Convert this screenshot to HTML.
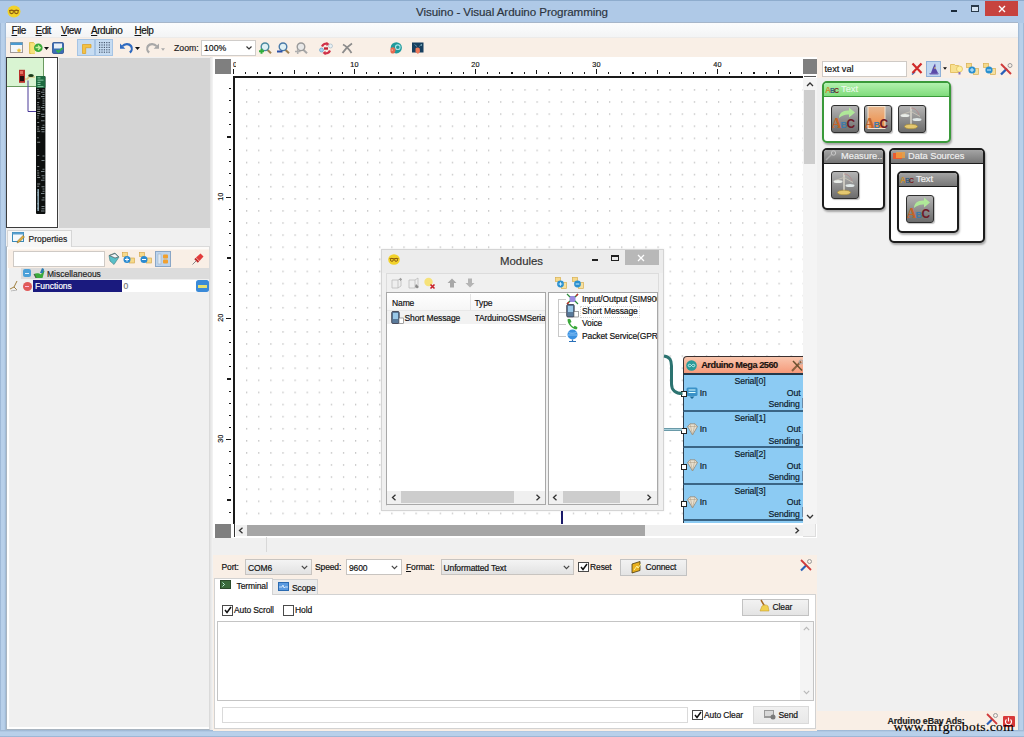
<!DOCTYPE html>
<html><head><meta charset="utf-8">
<style>
*{box-sizing:border-box;margin:0;padding:0}
html,body{width:1024px;height:737px;overflow:hidden;background:#afc9e7;font-family:"Liberation Sans",sans-serif;font-size:8.5px;color:#000}
.a{position:absolute}
.t{position:absolute;white-space:nowrap;line-height:1;-webkit-text-stroke:.18px currentColor}
.m{font-size:10px;color:#111;letter-spacing:-.45px}
.u{text-decoration:underline}
svg{position:absolute;overflow:visible}
</style></head><body>
<!-- ============ TITLE BAR ============ -->
<div class="a" style="left:0;top:0;width:1024px;height:737px;background:#afc9e7"></div>
<div class="a" style="left:6px;top:22px;width:1012px;height:1.2px;background:#a6b6ca"></div>
<div class="a" style="left:0;top:0;width:1024px;height:1px;background:#8eaccd"></div>
<!-- app icon -->
<svg style="left:7px;top:5px" width="14" height="13" viewBox="0 0 14 13"><ellipse cx="7" cy="6.5" rx="6.5" ry="6" fill="#f2d22a"/><path d="M2 5.5h10" stroke="#9a6a10" stroke-width="1"/><circle cx="4.6" cy="6.8" r="1.8" fill="none" stroke="#8a5a10" stroke-width="1.1"/><circle cx="9.4" cy="6.8" r="1.8" fill="none" stroke="#8a5a10" stroke-width="1.1"/></svg>
<div class="t" style="left:416px;top:6px;font-size:11.6px;color:#2c3440;letter-spacing:-0.08px">Visuino - Visual Arduino Programming</div>
<div class="a" style="left:951px;top:10px;width:6px;height:2px;background:#1b2a3a"></div>
<div class="a" style="left:971px;top:5px;width:8px;height:7px;border:1.5px solid #2a3a4a;border-top-width:2.5px;background:#d6e4f2"></div>
<div class="a" style="left:985px;top:1px;width:33px;height:15px;background:#c7433e"></div>
<svg style="left:998px;top:4.5px" width="8" height="8" viewBox="0 0 8 8"><path d="M1 1L7 7M7 1L1 7" stroke="#fff" stroke-width="1.4"/></svg>

<!-- ============ CLIENT ============ -->
<div class="a" style="left:1018px;top:23px;width:6px;height:714px;background:linear-gradient(90deg,#9ab4d0,#b8d0ea 30%,#b8d0ea 80%,#8eaacb)"></div>
<div class="a" style="left:0;top:23px;width:6px;height:714px;background:linear-gradient(90deg,#8eaacb,#b8d0ea 20%,#b8d0ea 70%,#9ab4d0)"></div>
<div class="a" style="left:0;top:730px;width:1024px;height:7px;background:linear-gradient(#9ab4d0,#b8d0ea 30%,#b8d0ea 80%,#8eaacb)"></div>
<div class="a" style="left:6px;top:23px;width:1012px;height:707px;background:#f0f0f0"></div>
<!-- menu bar -->
<div class="a" style="left:6px;top:23px;width:1012px;height:14px;background:linear-gradient(#fbfcfd 10%,#f3f4f5)"></div>
<div class="t m" style="left:11.5px;top:26.4px"><span class="u">F</span>ile</div>
<div class="t m" style="left:35.5px;top:26.4px"><span class="u">E</span>dit</div>
<div class="t m" style="left:61px;top:26.4px"><span class="u">V</span>iew</div>
<div class="t m" style="left:91px;top:26.4px"><span class="u">A</span>rduino</div>
<div class="t m" style="left:134.5px;top:26.4px"><span class="u">H</span>elp</div>

<!-- toolbar -->
<div class="a" style="left:6px;top:36.5px;width:1012px;height:20.5px;background:#f9efe6;border-top:1.5px solid #ecebea"></div>

<!-- new -->
<svg style="left:10px;top:42px" width="13" height="11" viewBox="0 0 13 11"><rect x="0.5" y="0.5" width="12" height="10" fill="#f4f6f8" stroke="#a09a98"/><rect x="0.5" y="0.5" width="12" height="2.5" fill="#4a9ad0"/><path d="M9 6l.8 1.6 1.7.2-1.3 1.1.4 1.6-1.6-.9-1.5.9.3-1.6-1.2-1.1 1.7-.2z" fill="#f0c030"/></svg>
<!-- open -->
<svg style="left:29px;top:41px" width="14" height="13" viewBox="0 0 14 13"><path d="M0.5 1.5h4l1 1h0v10h-5z" fill="#f2dc70" stroke="#d8b840" stroke-width=".8"/><path d="M2 2.5h4v10h-4z" fill="#f6e27a"/><circle cx="9.3" cy="6.8" r="4.3" fill="#3aa83a"/><path d="M6.5 6.5h4.5M9 4.5l2.3 2.2L9 9" stroke="#c8f0a0" stroke-width="1.3" fill="none"/></svg>
<svg style="left:44px;top:47px" width="5" height="3" viewBox="0 0 5 3"><path d="M0 0h5L2.5 3z" fill="#111"/></svg>
<!-- save -->
<svg style="left:52px;top:42px" width="12" height="12" viewBox="0 0 12 12"><rect x="0.5" y="0.5" width="11" height="11" rx="1.2" fill="#3c6db5" stroke="#2a4f8f" stroke-width=".8"/><rect x="2" y="1.5" width="8" height="5" fill="#e8eef6"/><path d="M4.5 8.2l1.8 1.8 4.5-4.2" stroke="#37b24a" stroke-width="1.8" fill="none"/></svg>
<!-- pressed 1 -->
<div class="a" style="left:77px;top:39px;width:18px;height:17px;background:#c6dcf2;border:1px solid #a6c4e4"></div>
<svg style="left:81px;top:42.5px" width="11" height="11" viewBox="0 0 11 11"><path d="M1.5 10.5V1.5h8.5v3.2H4.7v5.8z" fill="#f3c244" stroke="#dca22c" stroke-width=".8"/></svg>
<div class="a" style="left:95px;top:39px;width:18px;height:17px;background:#c6dcf2;border:1px solid #a6c4e4"></div>
<svg style="left:99px;top:42px" width="11" height="11" viewBox="0 0 11 11"><g fill="#4a5a70">
<rect x="0" y="0" width="1.2" height="1.2"/><rect x="2.4" y="0" width="1.2" height="1.2"/><rect x="4.8" y="0" width="1.2" height="1.2"/><rect x="7.2" y="0" width="1.2" height="1.2"/><rect x="9.6" y="0" width="1.2" height="1.2"/>
<rect x="0" y="2.4" width="1.2" height="1.2"/><rect x="2.4" y="2.4" width="1.2" height="1.2"/><rect x="4.8" y="2.4" width="1.2" height="1.2"/><rect x="7.2" y="2.4" width="1.2" height="1.2"/><rect x="9.6" y="2.4" width="1.2" height="1.2"/>
<rect x="0" y="4.8" width="1.2" height="1.2"/><rect x="2.4" y="4.8" width="1.2" height="1.2"/><rect x="4.8" y="4.8" width="1.2" height="1.2"/><rect x="7.2" y="4.8" width="1.2" height="1.2"/><rect x="9.6" y="4.8" width="1.2" height="1.2"/>
<rect x="0" y="7.2" width="1.2" height="1.2"/><rect x="2.4" y="7.2" width="1.2" height="1.2"/><rect x="4.8" y="7.2" width="1.2" height="1.2"/><rect x="7.2" y="7.2" width="1.2" height="1.2"/><rect x="9.6" y="7.2" width="1.2" height="1.2"/>
<rect x="0" y="9.6" width="1.2" height="1.2"/><rect x="2.4" y="9.6" width="1.2" height="1.2"/><rect x="4.8" y="9.6" width="1.2" height="1.2"/><rect x="7.2" y="9.6" width="1.2" height="1.2"/><rect x="9.6" y="9.6" width="1.2" height="1.2"/>
</g></svg>
<!-- undo -->
<svg style="left:120px;top:42px" width="13" height="11" viewBox="0 0 13 11"><path d="M2.5 4.2C4.5 1.5 9 1.2 11 4c1.6 2.3.6 5.2-1.2 6.5" stroke="#2f6ac0" stroke-width="2.2" fill="none"/><path d="M0 1.5v5.3h5.3z" fill="#2f6ac0"/></svg>
<svg style="left:135px;top:47px" width="5" height="3" viewBox="0 0 5 3"><path d="M0 0h5L2.5 3z" fill="#111"/></svg>
<!-- redo -->
<svg style="left:146px;top:42px" width="13" height="11" viewBox="0 0 13 11"><path d="M10.5 4.2C8.5 1.5 4 1.2 2 4c-1.6 2.3-.6 5.2 1.2 6.5" stroke="#a8a8a8" stroke-width="2.2" fill="none"/><path d="M13 1.5v5.3H7.7z" fill="#a8a8a8"/></svg>
<svg style="left:161px;top:48px" width="4" height="3" viewBox="0 0 5 3"><path d="M0 0h5L2.5 3z" fill="#aaa"/></svg>
<div class="t" style="left:174px;top:43.5px;font-size:8.7px;color:#222">Zoom:</div>
<div class="a" style="left:201px;top:40px;width:55px;height:16px;background:#fff;border:1px solid #d0cdca"></div>
<div class="t" style="left:204px;top:43.5px;font-size:8.7px;color:#111">100%</div>
<svg style="left:246px;top:46px" width="6" height="4" viewBox="0 0 6 4"><path d="M.5.5L3 3 5.5.5" stroke="#333" stroke-width="1.2" fill="none"/></svg>
<!-- zoom in -->
<svg style="left:259px;top:42px" width="13" height="12" viewBox="0 0 13 12"><path d="M7.5 7l4.5 4.3" stroke="#a08050" stroke-width="2"/><circle cx="6" cy="4.8" r="3.8" fill="#dff0f4" stroke="#4a8aa0" stroke-width="1.4"/><path d="M0 9.2h5M2.5 6.7v5" stroke="#2fae3a" stroke-width="2"/></svg>
<!-- zoom out -->
<svg style="left:277px;top:42px" width="13" height="12" viewBox="0 0 13 12"><path d="M7.5 7l4.5 4.3" stroke="#a08050" stroke-width="2"/><circle cx="6" cy="4.8" r="3.8" fill="#dff0f4" stroke="#4a7aa8" stroke-width="1.4"/><path d="M0 9.5h5.5" stroke="#2a4fa8" stroke-width="2"/></svg>
<!-- zoom fit gray -->
<svg style="left:295px;top:42px" width="13" height="12" viewBox="0 0 13 12"><path d="M7.5 7l4.5 4.3" stroke="#a8a8a8" stroke-width="2"/><circle cx="6" cy="4.8" r="3.8" fill="#e8e8e8" stroke="#9a9a9a" stroke-width="1.4"/><path d="M0 9.5h5.5M2.7 7v5" stroke="#b0b0b0" stroke-width="1.6"/></svg>
<!-- red gear -->
<svg style="left:319px;top:41.5px" width="14" height="13" viewBox="0 0 14 13"><path d="M3 4.5C4 2 6.5 1.2 8.5 1.8" stroke="#d03048" stroke-width="2.2" fill="none"/><path d="M7.5 0l3 2-3 2.2z" fill="#d03048"/><path d="M11 8.5C10 11 7.5 11.8 5.5 11.2" stroke="#d03048" stroke-width="2.2" fill="none"/><path d="M6.5 13l-3-2 3-2.2z" fill="#d03048"/><path d="M5 6.5h4" stroke="#c02838" stroke-width="2.4"/><circle cx="2.5" cy="8" r="2" fill="#a8d4f0" stroke="#5a9ac8" stroke-width=".6"/><circle cx="11.5" cy="4" r="2" fill="#e8f0f4" stroke="#9ab0c0" stroke-width=".6"/></svg>
<!-- X gray -->
<svg style="left:341px;top:42px" width="12" height="12" viewBox="0 0 12 12"><path d="M1.5 11C4 7 7 4 11 1.5" stroke="#8c8c8c" stroke-width="1.8" fill="none"/><path d="M2 2.5C5 4 8 7 10.5 11" stroke="#8c8c8c" stroke-width="1.8" fill="none"/></svg>
<!-- teal -->
<svg style="left:390px;top:42px" width="12" height="12" viewBox="0 0 12 12"><circle cx="6.3" cy="5.8" r="5.6" fill="#1f9a9c"/><circle cx="7.8" cy="5.2" r="2.3" fill="none" stroke="#a8e4e8" stroke-width="1.1"/><path d="M.3 7c1.2-2 3.5-2.2 4.8-.4.8 1.3.3 3.6-1 4.6-1.5.6-3 .3-3.6-1.2z" fill="#e86a50"/><circle cx="2.2" cy="8" r=".6" fill="#fff"/></svg>
<!-- blue box -->
<svg style="left:412px;top:42px" width="12" height="12" viewBox="0 0 12 12"><rect x="0" y="0.5" width="11.5" height="10" fill="#173f5f"/><path d="M2.5 2.5l2.5 2M9.5 2L7.5 4.5M9.5 2v2" stroke="#7ab" stroke-width=".8"/><path d="M3.5 6.5c1-1.5 3-1.5 4.2 0l.3 3-2 2.5-2.5-2z" fill="#f07a5a"/></svg>


<!-- ============ LEFT PANEL ============ -->
<div class="a" style="left:6px;top:57px;width:52px;height:171px;background:#fff;border:1px solid #3c3c3c"></div>
<div class="a" style="left:7px;top:58px;width:37px;height:29px;background:#d9f4d2;border-right:1px solid #6a9a60;border-bottom:1px solid #6a9a60"></div>
<div class="a" style="left:59px;top:58px;width:151px;height:170px;background:#d4d4d4"></div>

<svg style="left:7px;top:58px" width="50" height="169" viewBox="0 0 50 169"><rect x="12" y="11.8" width="6" height="13" fill="#b8302a"/><rect x="13" y="18" width="4" height="5" fill="#201010"/><rect x="13" y="13" width="3" height="3" fill="#e07060"/><path d="M18 21h3v-2h7" stroke="#d8b060" stroke-width=".9" fill="none"/><path d="M21 22.5v31h8" stroke="#4a3a98" stroke-width="1" fill="none"/><ellipse cx="24" cy="17.5" rx="2.8" ry="1.5" fill="#1a3a1a"/><rect x="29" y="17.9" width="9.4" height="138" rx="1" fill="#0c0f0e"/><rect x="29" y="17.9" width="9.4" height="12" rx="1" fill="#1e6a40"/><rect x="30.5" y="19.5" width="3" height=".8" fill="#a8e0c0"/><rect x="30.5" y="21.7" width="6" height=".8" fill="#a8e0c0"/><rect x="30.5" y="23.9" width="3" height=".8" fill="#a8e0c0"/><rect x="30.5" y="26.1" width="3" height=".8" fill="#a8e0c0"/><rect x="30.5" y="28.3" width="6" height=".8" fill="#a8e0c0"/><rect x="30.2" y="31.0" width="1.5" height=".8" fill="#c8d0d0" opacity=".8"/><rect x="35.5" y="31.6" width="2" height=".8" fill="#b8c8d0" opacity=".8"/><rect x="30.2" y="33.2" width="3" height=".8" fill="#c8d0d0" opacity=".8"/><rect x="34.0" y="33.8" width="3.5" height=".8" fill="#b8c8d0" opacity=".8"/><rect x="30.2" y="35.4" width="3" height=".8" fill="#c8d0d0" opacity=".8"/><rect x="35.5" y="36.0" width="2" height=".8" fill="#b8c8d0" opacity=".8"/><rect x="30.2" y="37.6" width="1.5" height=".8" fill="#c8d0d0" opacity=".8"/><rect x="34.0" y="38.2" width="3.5" height=".8" fill="#b8c8d0" opacity=".8"/><rect x="30.2" y="39.8" width="3" height=".8" fill="#c8d0d0" opacity=".8"/><rect x="35.5" y="40.4" width="2" height=".8" fill="#b8c8d0" opacity=".8"/><rect x="35.5" y="42.6" width="2" height=".8" fill="#b8c8d0" opacity=".8"/><rect x="30.2" y="44.2" width="2" height=".8" fill="#c8d0d0" opacity=".8"/><rect x="35.5" y="44.8" width="2" height=".8" fill="#b8c8d0" opacity=".8"/><rect x="30.2" y="46.4" width="1.5" height=".8" fill="#c8d0d0" opacity=".8"/><rect x="35.5" y="47.0" width="2" height=".8" fill="#b8c8d0" opacity=".8"/><rect x="30.2" y="48.6" width="3" height=".8" fill="#c8d0d0" opacity=".8"/><rect x="34.0" y="49.2" width="3.5" height=".8" fill="#b8c8d0" opacity=".8"/><rect x="30.2" y="50.8" width="3" height=".8" fill="#c8d0d0" opacity=".8"/><rect x="35.5" y="51.4" width="2" height=".8" fill="#b8c8d0" opacity=".8"/><rect x="30.2" y="53.0" width="3" height=".8" fill="#c8d0d0" opacity=".8"/><rect x="30.2" y="55.2" width="3" height=".8" fill="#c8d0d0" opacity=".8"/><rect x="34.0" y="55.8" width="3.5" height=".8" fill="#b8c8d0" opacity=".8"/><rect x="30.2" y="57.4" width="2" height=".8" fill="#c8d0d0" opacity=".8"/><rect x="34.5" y="58.0" width="3" height=".8" fill="#b8c8d0" opacity=".8"/><rect x="30.2" y="59.6" width="1.5" height=".8" fill="#c8d0d0" opacity=".8"/><rect x="34.0" y="62.4" width="3.5" height=".8" fill="#b8c8d0" opacity=".8"/><rect x="30.2" y="64.0" width="2" height=".8" fill="#c8d0d0" opacity=".8"/><rect x="35.5" y="66.8" width="2" height=".8" fill="#b8c8d0" opacity=".8"/><rect x="30.2" y="68.4" width="2" height=".8" fill="#c8d0d0" opacity=".8"/><rect x="34.5" y="69.0" width="3" height=".8" fill="#b8c8d0" opacity=".8"/><rect x="30.2" y="70.6" width="2" height=".8" fill="#c8d0d0" opacity=".8"/><rect x="34.0" y="71.2" width="3.5" height=".8" fill="#b8c8d0" opacity=".8"/><rect x="30.2" y="72.8" width="3" height=".8" fill="#c8d0d0" opacity=".8"/><rect x="34.5" y="73.4" width="3" height=".8" fill="#b8c8d0" opacity=".8"/><rect x="30.2" y="79.4" width="1.5" height=".8" fill="#c8d0d0" opacity=".8"/><rect x="30.2" y="83.8" width="3" height=".8" fill="#c8d0d0" opacity=".8"/><rect x="30.2" y="97.0" width="2" height=".8" fill="#c8d0d0" opacity=".8"/><rect x="35.5" y="97.6" width="2" height=".8" fill="#b8c8d0" opacity=".8"/><rect x="34.5" y="102.0" width="3" height=".8" fill="#b8c8d0" opacity=".8"/><rect x="30.2" y="108.0" width="2" height=".8" fill="#c8d0d0" opacity=".8"/><rect x="35.5" y="110.8" width="2" height=".8" fill="#b8c8d0" opacity=".8"/><rect x="30.2" y="112.4" width="1.5" height=".8" fill="#c8d0d0" opacity=".8"/><rect x="34.0" y="113.0" width="3.5" height=".8" fill="#b8c8d0" opacity=".8"/><rect x="30.2" y="114.6" width="2" height=".8" fill="#c8d0d0" opacity=".8"/><rect x="30.2" y="116.8" width="2" height=".8" fill="#c8d0d0" opacity=".8"/><rect x="34.5" y="117.4" width="3" height=".8" fill="#b8c8d0" opacity=".8"/><rect x="30.2" y="119.0" width="3" height=".8" fill="#c8d0d0" opacity=".8"/><rect x="35.5" y="119.6" width="2" height=".8" fill="#b8c8d0" opacity=".8"/><rect x="34.0" y="121.8" width="3.5" height=".8" fill="#b8c8d0" opacity=".8"/><rect x="30.2" y="125.6" width="3" height=".8" fill="#c8d0d0" opacity=".8"/><rect x="30.2" y="127.8" width="2" height=".8" fill="#c8d0d0" opacity=".8"/><rect x="34.5" y="128.4" width="3" height=".8" fill="#b8c8d0" opacity=".8"/><rect x="35.5" y="130.6" width="2" height=".8" fill="#b8c8d0" opacity=".8"/><rect x="35.5" y="132.8" width="2" height=".8" fill="#b8c8d0" opacity=".8"/><rect x="30.2" y="134.4" width="1.5" height=".8" fill="#c8d0d0" opacity=".8"/><rect x="34.0" y="135.0" width="3.5" height=".8" fill="#b8c8d0" opacity=".8"/><rect x="30.2" y="136.6" width="1.5" height=".8" fill="#c8d0d0" opacity=".8"/><rect x="35.5" y="139.4" width="2" height=".8" fill="#b8c8d0" opacity=".8"/><rect x="34.5" y="141.6" width="3" height=".8" fill="#b8c8d0" opacity=".8"/><rect x="30.2" y="145.4" width="1.5" height=".8" fill="#c8d0d0" opacity=".8"/><rect x="34.5" y="148.2" width="3" height=".8" fill="#b8c8d0" opacity=".8"/><rect x="30.2" y="149.8" width="1.5" height=".8" fill="#c8d0d0" opacity=".8"/><rect x="34.5" y="150.4" width="3" height=".8" fill="#b8c8d0" opacity=".8"/><rect x="34.0" y="152.6" width="3.5" height=".8" fill="#b8c8d0" opacity=".8"/><rect x="30.5" y="131" width="1.3" height="22" fill="#a8c8d8"/></svg>


<!-- properties -->
<div class="a" style="left:6px;top:246px;width:204px;height:484px;background:#f0f0f0;border:1px solid #dadada;border-left:1px solid #a8b4c0;border-bottom:1px solid #a8b4c0;box-shadow:inset 2px -2px 0 #fff"></div>
<div class="a" style="left:7px;top:230px;width:65px;height:17px;background:#f7f7f7;border:1px solid #d6d6d6;border-bottom:none"></div>
<svg style="left:12px;top:232px" width="13" height="12" viewBox="0 0 13 12"><rect x="0.5" y="0.5" width="11" height="9" fill="#f4f8fb" stroke="#3a8ab8" stroke-width="1"/><rect x="0.5" y="0.5" width="11" height="2" fill="#5aa0d0"/><path d="M5 11l1-2.5 5-5 1.5 1.5-5 5z" fill="#e0b040" stroke="#806020" stroke-width=".5"/></svg>
<div class="t" style="left:28.5px;top:235px;color:#222">Properties</div>

<!-- props toolbar -->
<div class="a" style="left:8px;top:247px;width:201px;height:21px;background:linear-gradient(#fdfbf9 0,#fdfbf9 2px,#f9efe6 3px)"></div>
<div class="a" style="left:13px;top:251px;width:92px;height:16px;background:#fff;border:1px solid #cfcac5"></div>
<svg style="left:108px;top:252px" width="12" height="13" viewBox="0 0 12 13"><path d="M1 3.5L7 1l4 4-5 7.5L2 9z" fill="#5ac0c8" stroke="#3a7a80" stroke-width=".6"/><path d="M1.5 3.5L7 1.5l3.5 3.5-3.5 1z" fill="#f0f6f8" stroke="#555" stroke-width=".7"/></svg>
<svg style="left:122px;top:252px" width="13" height="13" viewBox="0 0 13 13"><rect x="0.5" y="0.5" width="5" height="4" fill="#f6d98a" stroke="#d0a040" stroke-width=".6"/><rect x="7.5" y="6" width="5" height="5" fill="#f6d98a" stroke="#d0a040" stroke-width=".6"/><circle cx="5" cy="7.5" r="3.5" fill="#2a8ad0"/><path d="M3 7.5h4M5 5.5v4" stroke="#fff" stroke-width="1"/></svg>
<svg style="left:139px;top:252px" width="13" height="13" viewBox="0 0 13 13"><rect x="0.5" y="0.5" width="5" height="4" fill="#f6d98a" stroke="#d0a040" stroke-width=".6"/><rect x="7.5" y="6" width="5" height="5" fill="#f6d98a" stroke="#d0a040" stroke-width=".6"/><circle cx="5" cy="7.5" r="3.5" fill="#2a8ad0"/><path d="M3 7.5h4" stroke="#fff" stroke-width="1"/></svg>
<div class="a" style="left:155px;top:251px;width:16px;height:16px;background:#bcd4ee;border:1px solid #8aa6c6"></div>
<svg style="left:157px;top:253px" width="12" height="12" viewBox="0 0 12 12"><rect x="1" y="1" width="3" height="10" fill="#dfe8f2" stroke="#9ab" stroke-width=".5"/><rect x="6" y="1.5" width="5" height="4" rx="1" fill="#f0a030"/><rect x="6" y="6.5" width="5" height="4" rx="1" fill="#f0a030"/></svg>
<svg style="left:192px;top:253px" width="12" height="12" viewBox="0 0 12 12"><path d="M.5 11.5L5 7" stroke="#888" stroke-width="1"/><path d="M4 4.5L8.5 .5 11.5 3.5 7.5 8z" fill="#e23a3a"/><path d="M3 5.5l3.5 3.5" stroke="#c02a2a" stroke-width="2"/></svg>
<!-- misc row -->
<div class="a" style="left:21px;top:268px;width:188px;height:11px;background:#dcdcdc"></div>
<div class="a" style="left:23px;top:269px;width:8px;height:8px;background:#4aa0d8;border-radius:2px"></div>
<div class="a" style="left:25px;top:272.5px;width:4px;height:1px;background:#dfefff"></div>
<svg style="left:33px;top:267px" width="12" height="12" viewBox="0 0 12 12"><path d="M1 7c2-1 5-1 7 .5L10 3l1.5 1-2 7H3z" fill="#3aaa3a"/><path d="M7 6l2-5 2 1-1 4z" fill="#2a7ab0"/><path d="M1 7l2 4" stroke="#333" stroke-width=".8"/></svg>
<div class="t" style="left:47px;top:270px;color:#222;font-size:8.5px">Miscellaneous</div>
<!-- functions row -->
<svg style="left:9px;top:280px" width="12" height="12" viewBox="0 0 12 12"><path d="M1 9l4-2 3 3M5 7l3-6" stroke="#a08040" stroke-width="1" fill="none"/><path d="M2 11c2-1 4 0 6-1" stroke="#bbb" stroke-width="1" fill="none"/></svg>
<div class="a" style="left:22.5px;top:281.5px;width:9px;height:9px;background:#e05a5a;border-radius:50%"></div>
<div class="a" style="left:25px;top:285.5px;width:4px;height:1px;background:#fbd"></div>
<div class="a" style="left:33px;top:280px;width:89px;height:12px;background:#1a1a7e"></div>
<div class="t" style="left:35px;top:282px;color:#fff;font-size:8.5px">Functions</div>
<div class="a" style="left:122px;top:280px;width:87px;height:12px;background:#fff"></div>
<div class="t" style="left:123.5px;top:282px;color:#777;font-size:8.5px">0</div>
<div class="a" style="left:196px;top:280px;width:12.5px;height:12px;background:#3a8ad8;border-radius:2.5px"></div>
<div class="a" style="left:198px;top:284.5px;width:8.5px;height:3px;background:#e8e070"></div>


<!-- ============ CANVAS ============ -->
<div class="a" style="left:213px;top:57px;width:604px;height:481px;background:#fff"></div>
<svg style="left:236px;top:80px" width="567" height="442" viewBox="0 0 567 442"><defs><pattern id="gd" patternUnits="userSpaceOnUse" width="12.1" height="12.1" x="10.1" y="9.1"><rect x="0" y="0" width="1.2" height="1.6" fill="#c2c2c2"/></pattern></defs><rect width="567" height="442" fill="url(#gd)"/></svg>
<div class="a" style="left:215px;top:59px;width:16px;height:15px;background:#7f7f7f"></div>
<div class="a" style="left:803px;top:59px;width:14px;height:15px;background:#7f7f7f"></div>
<div class="a" style="left:215px;top:524px;width:16px;height:14px;background:#7f7f7f"></div>
<div class="a" style="left:234px;top:76.2px;width:569px;height:1.7px;background:#1a1a1a"></div>
<div class="a" style="left:233.4px;top:76px;width:1.7px;height:447.5px;background:#1a1a1a"></div><div class="a" style="left:233.6px;top:523px;width:1.2px;height:14px;background:#333"></div>
<div class="a" style="left:233.1px;top:68.9px;width:1.2px;height:5.4px;background:#1a1a1a"></div>
<div class="a" style="left:245.2px;top:72px;width:1.2px;height:2.4px;background:#1a1a1a"></div>
<div class="a" style="left:257.3px;top:72px;width:1.2px;height:2.4px;background:#1a1a1a"></div>
<div class="a" style="left:269.4px;top:72px;width:1.2px;height:2.4px;background:#1a1a1a"></div>
<div class="a" style="left:281.5px;top:72px;width:1.2px;height:2.4px;background:#1a1a1a"></div>
<div class="a" style="left:293.6px;top:70.3px;width:1.2px;height:4.1px;background:#1a1a1a"></div>
<div class="a" style="left:305.7px;top:72px;width:1.2px;height:2.4px;background:#1a1a1a"></div>
<div class="a" style="left:317.8px;top:72px;width:1.2px;height:2.4px;background:#1a1a1a"></div>
<div class="a" style="left:329.9px;top:72px;width:1.2px;height:2.4px;background:#1a1a1a"></div>
<div class="a" style="left:342.0px;top:72px;width:1.2px;height:2.4px;background:#1a1a1a"></div>
<div class="a" style="left:354.1px;top:68.9px;width:1.2px;height:5.4px;background:#1a1a1a"></div>
<div class="t" style="left:348.9px;top:61.2px;font-size:7.3px;color:#1a1a1a;width:11px;text-align:center">10</div>
<div class="a" style="left:366.2px;top:72px;width:1.2px;height:2.4px;background:#1a1a1a"></div>
<div class="a" style="left:378.3px;top:72px;width:1.2px;height:2.4px;background:#1a1a1a"></div>
<div class="a" style="left:390.4px;top:72px;width:1.2px;height:2.4px;background:#1a1a1a"></div>
<div class="a" style="left:402.5px;top:72px;width:1.2px;height:2.4px;background:#1a1a1a"></div>
<div class="a" style="left:414.6px;top:70.3px;width:1.2px;height:4.1px;background:#1a1a1a"></div>
<div class="a" style="left:426.7px;top:72px;width:1.2px;height:2.4px;background:#1a1a1a"></div>
<div class="a" style="left:438.8px;top:72px;width:1.2px;height:2.4px;background:#1a1a1a"></div>
<div class="a" style="left:450.9px;top:72px;width:1.2px;height:2.4px;background:#1a1a1a"></div>
<div class="a" style="left:463.0px;top:72px;width:1.2px;height:2.4px;background:#1a1a1a"></div>
<div class="a" style="left:475.1px;top:68.9px;width:1.2px;height:5.4px;background:#1a1a1a"></div>
<div class="t" style="left:469.9px;top:61.2px;font-size:7.3px;color:#1a1a1a;width:11px;text-align:center">20</div>
<div class="a" style="left:487.2px;top:72px;width:1.2px;height:2.4px;background:#1a1a1a"></div>
<div class="a" style="left:499.3px;top:72px;width:1.2px;height:2.4px;background:#1a1a1a"></div>
<div class="a" style="left:511.4px;top:72px;width:1.2px;height:2.4px;background:#1a1a1a"></div>
<div class="a" style="left:523.5px;top:72px;width:1.2px;height:2.4px;background:#1a1a1a"></div>
<div class="a" style="left:535.6px;top:70.3px;width:1.2px;height:4.1px;background:#1a1a1a"></div>
<div class="a" style="left:547.7px;top:72px;width:1.2px;height:2.4px;background:#1a1a1a"></div>
<div class="a" style="left:559.8px;top:72px;width:1.2px;height:2.4px;background:#1a1a1a"></div>
<div class="a" style="left:571.9px;top:72px;width:1.2px;height:2.4px;background:#1a1a1a"></div>
<div class="a" style="left:584.0px;top:72px;width:1.2px;height:2.4px;background:#1a1a1a"></div>
<div class="a" style="left:596.1px;top:68.9px;width:1.2px;height:5.4px;background:#1a1a1a"></div>
<div class="t" style="left:590.9px;top:61.2px;font-size:7.3px;color:#1a1a1a;width:11px;text-align:center">30</div>
<div class="a" style="left:608.2px;top:72px;width:1.2px;height:2.4px;background:#1a1a1a"></div>
<div class="a" style="left:620.3px;top:72px;width:1.2px;height:2.4px;background:#1a1a1a"></div>
<div class="a" style="left:632.4px;top:72px;width:1.2px;height:2.4px;background:#1a1a1a"></div>
<div class="a" style="left:644.5px;top:72px;width:1.2px;height:2.4px;background:#1a1a1a"></div>
<div class="a" style="left:656.6px;top:70.3px;width:1.2px;height:4.1px;background:#1a1a1a"></div>
<div class="a" style="left:668.7px;top:72px;width:1.2px;height:2.4px;background:#1a1a1a"></div>
<div class="a" style="left:680.8px;top:72px;width:1.2px;height:2.4px;background:#1a1a1a"></div>
<div class="a" style="left:692.9px;top:72px;width:1.2px;height:2.4px;background:#1a1a1a"></div>
<div class="a" style="left:705.0px;top:72px;width:1.2px;height:2.4px;background:#1a1a1a"></div>
<div class="a" style="left:717.1px;top:68.9px;width:1.2px;height:5.4px;background:#1a1a1a"></div>
<div class="t" style="left:711.9px;top:61.2px;font-size:7.3px;color:#1a1a1a;width:11px;text-align:center">40</div>
<div class="a" style="left:729.2px;top:72px;width:1.2px;height:2.4px;background:#1a1a1a"></div>
<div class="a" style="left:741.3px;top:72px;width:1.2px;height:2.4px;background:#1a1a1a"></div>
<div class="a" style="left:753.4px;top:72px;width:1.2px;height:2.4px;background:#1a1a1a"></div>
<div class="a" style="left:765.5px;top:72px;width:1.2px;height:2.4px;background:#1a1a1a"></div>
<div class="a" style="left:777.6px;top:70.3px;width:1.2px;height:4.1px;background:#1a1a1a"></div>
<div class="a" style="left:789.7px;top:72px;width:1.2px;height:2.4px;background:#1a1a1a"></div>
<div class="a" style="left:228.9px;top:88.0px;width:2.4px;height:1.2px;background:#1a1a1a"></div>
<div class="a" style="left:228.9px;top:100.1px;width:2.4px;height:1.2px;background:#1a1a1a"></div>
<div class="a" style="left:228.9px;top:112.2px;width:2.4px;height:1.2px;background:#1a1a1a"></div>
<div class="a" style="left:228.9px;top:124.3px;width:2.4px;height:1.2px;background:#1a1a1a"></div>
<div class="a" style="left:227.3px;top:136.4px;width:4px;height:1.2px;background:#1a1a1a"></div>
<div class="a" style="left:228.9px;top:148.5px;width:2.4px;height:1.2px;background:#1a1a1a"></div>
<div class="a" style="left:228.9px;top:160.6px;width:2.4px;height:1.2px;background:#1a1a1a"></div>
<div class="a" style="left:228.9px;top:172.7px;width:2.4px;height:1.2px;background:#1a1a1a"></div>
<div class="a" style="left:228.9px;top:184.8px;width:2.4px;height:1.2px;background:#1a1a1a"></div>
<div class="a" style="left:226px;top:196.9px;width:5.3px;height:1.2px;background:#1a1a1a"></div>
<div class="t" style="left:215.3px;top:193.4px;font-size:7.3px;color:#1a1a1a;transform:rotate(-90deg);transform-origin:center;width:11px;text-align:center">10</div>
<div class="a" style="left:228.9px;top:209.0px;width:2.4px;height:1.2px;background:#1a1a1a"></div>
<div class="a" style="left:228.9px;top:221.1px;width:2.4px;height:1.2px;background:#1a1a1a"></div>
<div class="a" style="left:228.9px;top:233.2px;width:2.4px;height:1.2px;background:#1a1a1a"></div>
<div class="a" style="left:228.9px;top:245.3px;width:2.4px;height:1.2px;background:#1a1a1a"></div>
<div class="a" style="left:227.3px;top:257.4px;width:4px;height:1.2px;background:#1a1a1a"></div>
<div class="a" style="left:228.9px;top:269.5px;width:2.4px;height:1.2px;background:#1a1a1a"></div>
<div class="a" style="left:228.9px;top:281.6px;width:2.4px;height:1.2px;background:#1a1a1a"></div>
<div class="a" style="left:228.9px;top:293.7px;width:2.4px;height:1.2px;background:#1a1a1a"></div>
<div class="a" style="left:228.9px;top:305.8px;width:2.4px;height:1.2px;background:#1a1a1a"></div>
<div class="a" style="left:226px;top:317.9px;width:5.3px;height:1.2px;background:#1a1a1a"></div>
<div class="t" style="left:215.3px;top:314.4px;font-size:7.3px;color:#1a1a1a;transform:rotate(-90deg);transform-origin:center;width:11px;text-align:center">20</div>
<div class="a" style="left:228.9px;top:330.0px;width:2.4px;height:1.2px;background:#1a1a1a"></div>
<div class="a" style="left:228.9px;top:342.1px;width:2.4px;height:1.2px;background:#1a1a1a"></div>
<div class="a" style="left:228.9px;top:354.2px;width:2.4px;height:1.2px;background:#1a1a1a"></div>
<div class="a" style="left:228.9px;top:366.3px;width:2.4px;height:1.2px;background:#1a1a1a"></div>
<div class="a" style="left:227.3px;top:378.4px;width:4px;height:1.2px;background:#1a1a1a"></div>
<div class="a" style="left:228.9px;top:390.5px;width:2.4px;height:1.2px;background:#1a1a1a"></div>
<div class="a" style="left:228.9px;top:402.6px;width:2.4px;height:1.2px;background:#1a1a1a"></div>
<div class="a" style="left:228.9px;top:414.7px;width:2.4px;height:1.2px;background:#1a1a1a"></div>
<div class="a" style="left:228.9px;top:426.8px;width:2.4px;height:1.2px;background:#1a1a1a"></div>
<div class="a" style="left:226px;top:438.9px;width:5.3px;height:1.2px;background:#1a1a1a"></div>
<div class="t" style="left:215.3px;top:435.4px;font-size:7.3px;color:#1a1a1a;transform:rotate(-90deg);transform-origin:center;width:11px;text-align:center">30</div>
<div class="a" style="left:228.9px;top:451.0px;width:2.4px;height:1.2px;background:#1a1a1a"></div>
<div class="a" style="left:228.9px;top:463.1px;width:2.4px;height:1.2px;background:#1a1a1a"></div>
<div class="a" style="left:228.9px;top:475.2px;width:2.4px;height:1.2px;background:#1a1a1a"></div>
<div class="a" style="left:228.9px;top:487.3px;width:2.4px;height:1.2px;background:#1a1a1a"></div>
<div class="a" style="left:227.3px;top:499.4px;width:4px;height:1.2px;background:#1a1a1a"></div>
<div class="a" style="left:228.9px;top:511.5px;width:2.4px;height:1.2px;background:#1a1a1a"></div>
<div class="t" style="left:233px;top:61px;font-size:7.5px;color:#222;width:3px;overflow:hidden">0</div>
<div class="a" style="left:236px;top:525px;width:567px;height:11px;background:#f0f0f0"></div>
<svg style="left:238px;top:527px" width="6" height="7" viewBox="0 0 6 7"><path d="M4.5 .8L1.5 3.5l3 2.7" stroke="#333" stroke-width="1.3" fill="none"/></svg>
<div class="a" style="left:247px;top:525px;width:398px;height:11px;background:#a6a6a6"></div>
<svg style="left:793.5px;top:527px" width="6" height="7" viewBox="0 0 6 7"><path d="M1.5 .8l3 2.7-3 2.7" stroke="#333" stroke-width="1.3" fill="none"/></svg>
<div class="a" style="left:803px;top:78px;width:14px;height:446px;background:#f4f4f4"></div><div class="a" style="left:804px;top:76.2px;width:12px;height:1.3px;background:#555"></div><div class="a" style="left:803px;top:524px;width:13px;height:13px;background:#f2f2f2;border-right:1px solid #ddd;border-bottom:1px solid #ddd"></div>
<svg style="left:806px;top:81px" width="8" height="6" viewBox="0 0 8 6"><path d="M1 5l3-3 3 3" stroke="#333" stroke-width="1.3" fill="none"/></svg>
<div class="a" style="left:804px;top:90px;width:11px;height:74px;background:#cdcdcd"></div>
<svg style="left:806px;top:514px" width="8" height="6" viewBox="0 0 8 6"><path d="M1 1l3 3 3-3" stroke="#333" stroke-width="1.3" fill="none"/></svg>
<div class="a" style="left:266px;top:537px;width:1px;height:15px;background:#d8d8d8"></div>
<div class="a" style="left:561px;top:511px;width:2px;height:13px;background:#1a1a6a"></div>
<!--COMP-->
<div class="a" style="left:683px;top:356.2px;width:119.5px;height:167.3px;overflow:hidden">
<div class="a" style="left:0;top:0;width:130px;height:19.3px;background:linear-gradient(#f9c6ae,#f59a7a);border:1.2px solid #3a3030;border-bottom:2.6px solid #23384a;border-radius:4px 4px 0 0"></div>
<svg style="left:2.5px;top:3.5px" width="11" height="11" viewBox="0 0 11 11"><circle cx="5.5" cy="5.5" r="5.3" fill="#2a9a98"/><path d="M2.2 5.5c0-1.6 2.4-1.6 3.3 0s3.3 1.6 3.3 0-2.4-1.6-3.3 0-3.3 1.6-3.3 0" stroke="#dff" stroke-width=".8" fill="none"/></svg>
<div class="t" style="left:18.2px;top:4.5px;font-size:9.2px;font-weight:bold;color:#1a1210;letter-spacing:-.45px">Arduino Mega 2560</div>
<svg style="left:108px;top:3px" width="12" height="13" viewBox="0 0 12 13"><path d="M1 12L10 2.5" stroke="#8a6040" stroke-width="2"/><path d="M2 2l9 9.5" stroke="#6a5030" stroke-width="1.5"/><circle cx="10" cy="3" r="2" fill="none" stroke="#aaa" stroke-width="1"/></svg>
<div class="a" style="left:0;top:19.3px;width:130px;height:36.5px;background:#8ccbf3;border-left:1.2px solid #2a3a4a;border-bottom:2.6px solid #3a6585"></div>
<div class="t" style="left:40px;top:21.2px;font-size:8.7px;color:#0c1a2a;width:54px;text-align:center;letter-spacing:-.1px">Serial[0]</div>
<div class="t" style="left:16.7px;top:32.5px;font-size:8.7px;color:#0c1a2a">In</div>
<div class="t" style="left:60px;top:32.5px;font-size:8.7px;color:#0c1a2a;width:57.8px;text-align:right">Out</div>
<div class="t" style="left:40px;top:44.3px;font-size:8.7px;color:#0c1a2a;width:76.8px;text-align:right;letter-spacing:-.1px">Sending</div>
<div class="a" style="left:118.5px;top:41.8px;width:1px;height:10px;background:#6a8aa8"></div>
<svg style="left:3px;top:30.8px" width="12" height="13" viewBox="0 0 12 13"><rect x=".5" y=".5" width="11" height="8.5" rx="1.5" fill="#3a92c8"/><path d="M2.5 3h7M2.5 5.5h7" stroke="#dff" stroke-width="1"/><path d="M3.5 9.5h5l-2.5 2.5z" fill="#1a6a98"/></svg>
<div class="a" style="left:0;top:55.8px;width:130px;height:36.5px;background:#8ccbf3;border-left:1.2px solid #2a3a4a;border-bottom:2.6px solid #3a6585"></div>
<div class="t" style="left:40px;top:57.7px;font-size:8.7px;color:#0c1a2a;width:54px;text-align:center;letter-spacing:-.1px">Serial[1]</div>
<div class="t" style="left:16.7px;top:69.0px;font-size:8.7px;color:#0c1a2a">In</div>
<div class="t" style="left:60px;top:69.0px;font-size:8.7px;color:#0c1a2a;width:57.8px;text-align:right">Out</div>
<div class="t" style="left:40px;top:80.8px;font-size:8.7px;color:#0c1a2a;width:76.8px;text-align:right;letter-spacing:-.1px">Sending</div>
<div class="a" style="left:118.5px;top:78.3px;width:1px;height:10px;background:#6a8aa8"></div>
<svg style="left:3.5px;top:66.8px" width="11" height="13" viewBox="0 0 11 13"><path d="M.5 3.5L3 .8h5l2.5 2.7L5.5 12z" fill="#e8e0d0" stroke="#8a8070" stroke-width=".7"/><path d="M.5 3.5h10M3 .8l2.5 11M8 .8L5.5 12" stroke="#a89880" stroke-width=".5"/></svg>
<div class="a" style="left:0;top:92.3px;width:130px;height:36.5px;background:#8ccbf3;border-left:1.2px solid #2a3a4a;border-bottom:2.6px solid #3a6585"></div>
<div class="t" style="left:40px;top:94.2px;font-size:8.7px;color:#0c1a2a;width:54px;text-align:center;letter-spacing:-.1px">Serial[2]</div>
<div class="t" style="left:16.7px;top:105.5px;font-size:8.7px;color:#0c1a2a">In</div>
<div class="t" style="left:60px;top:105.5px;font-size:8.7px;color:#0c1a2a;width:57.8px;text-align:right">Out</div>
<div class="t" style="left:40px;top:117.3px;font-size:8.7px;color:#0c1a2a;width:76.8px;text-align:right;letter-spacing:-.1px">Sending</div>
<div class="a" style="left:118.5px;top:114.8px;width:1px;height:10px;background:#6a8aa8"></div>
<svg style="left:3.5px;top:103.3px" width="11" height="13" viewBox="0 0 11 13"><path d="M.5 3.5L3 .8h5l2.5 2.7L5.5 12z" fill="#e8e0d0" stroke="#8a8070" stroke-width=".7"/><path d="M.5 3.5h10M3 .8l2.5 11M8 .8L5.5 12" stroke="#a89880" stroke-width=".5"/></svg>
<div class="a" style="left:0;top:128.8px;width:130px;height:36.5px;background:#8ccbf3;border-left:1.2px solid #2a3a4a;border-bottom:2.6px solid #3a6585"></div>
<div class="t" style="left:40px;top:130.7px;font-size:8.7px;color:#0c1a2a;width:54px;text-align:center;letter-spacing:-.1px">Serial[3]</div>
<div class="t" style="left:16.7px;top:142.0px;font-size:8.7px;color:#0c1a2a">In</div>
<div class="t" style="left:60px;top:142.0px;font-size:8.7px;color:#0c1a2a;width:57.8px;text-align:right">Out</div>
<div class="t" style="left:40px;top:153.8px;font-size:8.7px;color:#0c1a2a;width:76.8px;text-align:right;letter-spacing:-.1px">Sending</div>
<div class="a" style="left:118.5px;top:151.3px;width:1px;height:10px;background:#6a8aa8"></div>
<svg style="left:3.5px;top:139.8px" width="11" height="13" viewBox="0 0 11 13"><path d="M.5 3.5L3 .8h5l2.5 2.7L5.5 12z" fill="#e8e0d0" stroke="#8a8070" stroke-width=".7"/><path d="M.5 3.5h10M3 .8l2.5 11M8 .8L5.5 12" stroke="#a89880" stroke-width=".5"/></svg>
<div class="a" style="left:0;top:165.3px;width:130px;height:36.5px;background:#8ccbf3;border-left:1.2px solid #2a3a4a;border-bottom:2.6px solid #3a6585"></div>
<div class="t" style="left:40px;top:167.2px;font-size:8.7px;color:#0c1a2a;width:54px;text-align:center;letter-spacing:-.1px">I2C</div>
<div class="t" style="left:16.7px;top:178.5px;font-size:8.7px;color:#0c1a2a">In</div>
<div class="t" style="left:60px;top:178.5px;font-size:8.7px;color:#0c1a2a;width:57.8px;text-align:right">Out</div>
<div class="t" style="left:40px;top:190.3px;font-size:8.7px;color:#0c1a2a;width:76.8px;text-align:right;letter-spacing:-.1px">Sending</div>
<div class="a" style="left:118.5px;top:187.8px;width:1px;height:10px;background:#6a8aa8"></div>
<svg style="left:3.5px;top:176.3px" width="11" height="13" viewBox="0 0 11 13"><path d="M.5 3.5L3 .8h5l2.5 2.7L5.5 12z" fill="#e8e0d0" stroke="#8a8070" stroke-width=".7"/><path d="M.5 3.5h10M3 .8l2.5 11M8 .8L5.5 12" stroke="#a89880" stroke-width=".5"/></svg>
</div>
<!--DLG-->
<div class="a" style="left:380.5px;top:249px;width:283px;height:261.5px;background:#f0f0f0;border:1px solid #d4d4d4;box-shadow:0 0 2px rgba(0,0,0,.08)"></div>
<div class="a" style="left:381.5px;top:250px;width:281px;height:23px;background:#ececec"></div>
<svg style="left:388px;top:254px" width="12" height="11" viewBox="0 0 12 11"><ellipse cx="6" cy="5.5" rx="5.8" ry="5.3" fill="#f2d22a"/><path d="M1.5 4.5h9" stroke="#9a6a10" stroke-width=".9"/><circle cx="3.9" cy="5.8" r="1.5" fill="none" stroke="#8a5a10" stroke-width="1"/><circle cx="8.1" cy="5.8" r="1.5" fill="none" stroke="#8a5a10" stroke-width="1"/></svg>
<div class="t" style="left:500px;top:256px;font-size:11.4px;color:#333">Modules</div>
<div class="a" style="left:591.5px;top:259px;width:6px;height:1.6px;background:#222"></div>
<div class="a" style="left:611px;top:255px;width:8px;height:6px;border:1.2px solid #222;border-top-width:2px"></div>
<div class="a" style="left:624.5px;top:250px;width:34px;height:15px;background:#b8b8b8"></div>
<svg style="left:637px;top:253.5px" width="8" height="8" viewBox="0 0 8 8"><path d="M1 1l6 6M7 1L1 7" stroke="#fff" stroke-width="1.3"/></svg>
<div class="a" style="left:385.5px;top:272.5px;width:273.5px;height:233px;border:1px solid #dcdcdc;border-bottom:none"></div>
<svg style="left:391px;top:277px" width="12" height="12" viewBox="0 0 12 12"><path d="M1 3h6v8H1zM7 3l3-2v8l-3 2" fill="#eee" stroke="#bbb" stroke-width=".8"/><path d="M9.5 1v3M8 2.5h3" stroke="#999" stroke-width=".8"/></svg>
<svg style="left:408px;top:277px" width="12" height="12" viewBox="0 0 12 12"><path d="M1 3h6v8H1zM7 3l3-2v8l-3 2" fill="#eee" stroke="#bbb" stroke-width=".8"/><path d="M8 7l3 3-2 1.5-2-2z" fill="#8a8a8a"/></svg>
<svg style="left:424px;top:277px" width="12" height="12" viewBox="0 0 12 12"><circle cx="4.5" cy="5" r="4.2" fill="#f6e27a"/><path d="M6.5 7.5l4 4M10.5 7.5l-4 4" stroke="#c8202a" stroke-width="1.6"/></svg>
<svg style="left:447px;top:278px" width="10" height="10" viewBox="0 0 10 10"><path d="M5 .5L9.5 5H7v4.5H3V5H.5z" fill="#a8a8a8"/></svg>
<svg style="left:464.5px;top:278px" width="10" height="10" viewBox="0 0 10 10"><path d="M5 9.5L9.5 5H7V.5H3V5H.5z" fill="#b4b4b4"/></svg>
<svg style="left:554.5px;top:277px" width="12" height="12" viewBox="0 0 12 12"><rect x=".5" y=".5" width="5" height="4" fill="#f6d98a" stroke="#d8b050" stroke-width=".7"/><rect x="6.5" y="5.5" width="5" height="6" fill="#f6e0a0" stroke="#d8b050" stroke-width=".7"/><circle cx="5.5" cy="7" r="3.4" fill="#2a90d0"/><path d="M3.7 7h3.6M5.5 5.2v3.6" stroke="#cfefff" stroke-width="1"/></svg>
<svg style="left:571.5px;top:277px" width="12" height="12" viewBox="0 0 12 12"><rect x=".5" y=".5" width="5" height="4" fill="#f6d98a" stroke="#d8b050" stroke-width=".7"/><rect x="6.5" y="5.5" width="5" height="6" fill="#f6e0a0" stroke="#d8b050" stroke-width=".7"/><circle cx="5.5" cy="7" r="3.4" fill="#2a90d0"/><path d="M3.7 7h3.6" stroke="#cfefff" stroke-width="1"/></svg>
<div class="a" style="left:386px;top:292px;width:160px;height:213px;background:#fff;border:1px solid #a8a8a8"></div>
<div class="a" style="left:387px;top:293px;width:158px;height:18px;background:linear-gradient(#fff,#f6f6f6);border-bottom:1px solid #e8e8e8"></div>
<div class="a" style="left:469.5px;top:294px;width:1px;height:16px;background:#e4e4e4"></div>
<div class="t" style="left:392px;top:298.5px;font-size:8.5px;color:#111;letter-spacing:-.12px">Name</div>
<div class="t" style="left:474.5px;top:298.5px;font-size:8.5px;color:#111;letter-spacing:-.12px">Type</div>
<div class="a" style="left:387px;top:311px;width:158px;height:13px;background:#f2f2f2"></div>
<svg style="left:391px;top:311px" width="13" height="13" viewBox="0 0 13 13"><rect x=".7" y=".5" width="7.5" height="12" rx="1.2" fill="#5a7a9a" stroke="#334" stroke-width=".8"/><rect x="2" y="2" width="5" height="6" fill="#9ac8e8"/><rect x="8" y="7" width="4.5" height="5.5" fill="#fff" stroke="#666" stroke-width=".6"/></svg>
<div class="t" style="left:404.5px;top:314px;font-size:8.5px;color:#111;letter-spacing:-.12px">Short Message</div>
<div class="t" style="left:474.5px;top:314px;font-size:8.5px;color:#111;letter-spacing:-.12px;width:70px;overflow:hidden">TArduinoGSMSerialS</div>
<div class="a" style="left:387px;top:491px;width:158px;height:12.5px;background:#f0f0f0"></div>
<svg style="left:390.5px;top:494px" width="6" height="7" viewBox="0 0 6 7"><path d="M4.5 .8L1.5 3.5l3 2.7" stroke="#333" stroke-width="1.3" fill="none"/></svg>
<div class="a" style="left:401px;top:491px;width:113px;height:12px;background:#cdcdcd"></div>
<svg style="left:535px;top:494px" width="6" height="7" viewBox="0 0 6 7"><path d="M1.5 .8l3 2.7-3 2.7" stroke="#333" stroke-width="1.3" fill="none"/></svg>
<div class="a" style="left:548px;top:292px;width:110px;height:213px;background:#fff;border:1px solid #a8a8a8"></div>
<div class="a" style="left:558px;top:299px;width:1px;height:37.5px;background:#c8c8c8"></div>
<div class="a" style="left:558px;top:299px;width:8px;height:1px;background:#c8c8c8"></div>
<div class="a" style="left:558px;top:311.5px;width:8px;height:1px;background:#c8c8c8"></div>
<div class="a" style="left:558px;top:324px;width:8px;height:1px;background:#c8c8c8"></div>
<div class="a" style="left:558px;top:336.3px;width:8px;height:1px;background:#c8c8c8"></div>
<svg style="left:566px;top:293px" width="13" height="12" viewBox="0 0 13 12"><rect x="3.5" y="3" width="6" height="6" fill="#9a8ae0"/><path d="M1 1l3 3M12 1L9 4M1 11l3-3M12 11L9 8" stroke="#2a8a3a" stroke-width="1.2"/><path d="M1 11l2-2M12 1l-2 2" stroke="#c02020" stroke-width="1.2"/></svg>
<svg style="left:566px;top:304px" width="13" height="14" viewBox="0 0 13 14"><rect x=".7" y=".5" width="7.5" height="12.5" rx="1.2" fill="#5a7a9a" stroke="#334" stroke-width=".8"/><rect x="2" y="2" width="5" height="6" fill="#9ac8e8"/><rect x="8" y="7.5" width="4.5" height="5.5" fill="#fff" stroke="#666" stroke-width=".6"/></svg>
<svg style="left:566px;top:318px" width="13" height="12" viewBox="0 0 13 12"><path d="M1.5 1.5c1-1 2-1 3 0l1 2.5-1.5 1c1 2 2 3 3.5 4l1.2-1.3 2.5 1.3c.5 1 0 2-1 2.5C6 11 1.5 6 1.5 1.5z" fill="#3aa83a"/></svg>
<svg style="left:566px;top:329px" width="13" height="13" viewBox="0 0 13 13"><circle cx="6.5" cy="5.5" r="5" fill="#3a90e0"/><path d="M2.5 3.5c2 1 5 1 8 0M1.5 6h10" stroke="#a8d8ff" stroke-width=".7" fill="none"/><path d="M6.5 10.5v1.5M3 12.5h7" stroke="#2a70b8" stroke-width="1.2"/></svg>
<div class="t" style="left:582px;top:295px;font-size:8.5px;color:#111;letter-spacing:-.12px;width:75px;overflow:hidden">Input/Output (SIM900)</div>
<div class="a" style="left:580px;top:306px;width:60px;height:12px;border:1px dotted #d8d8d8"></div>
<div class="t" style="left:582px;top:307px;font-size:8.5px;color:#111;letter-spacing:-.12px">Short Message</div>
<div class="t" style="left:582px;top:319px;font-size:8.5px;color:#111;letter-spacing:-.12px">Voice</div>
<div class="t" style="left:582px;top:331.5px;font-size:8.5px;color:#111;letter-spacing:-.12px;width:75px;overflow:hidden">Packet Service(GPRS)</div>
<div class="a" style="left:549px;top:491px;width:108px;height:12.5px;background:#f0f0f0"></div>
<svg style="left:552px;top:494px" width="6" height="7" viewBox="0 0 6 7"><path d="M4.5 .8L1.5 3.5l3 2.7" stroke="#333" stroke-width="1.3" fill="none"/></svg>
<div class="a" style="left:562.5px;top:491px;width:57px;height:12px;background:#cdcdcd"></div>
<svg style="left:646px;top:494px" width="6" height="7" viewBox="0 0 6 7"><path d="M1.5 .8l3 2.7-3 2.7" stroke="#333" stroke-width="1.3" fill="none"/></svg>
<div class="a" style="left:681px;top:391.0px;width:5.5px;height:6px;background:#fff;border:1px solid #222"></div>
<div class="a" style="left:681px;top:427.5px;width:5.5px;height:6px;background:#fff;border:1px solid #222"></div>
<div class="a" style="left:681px;top:464.0px;width:5.5px;height:6px;background:#fff;border:1px solid #222"></div>
<div class="a" style="left:681px;top:500.5px;width:5.5px;height:6px;background:#fff;border:1px solid #222"></div>
<svg style="left:660px;top:350px" width="30" height="50" viewBox="0 0 30 50"><path d="M4 6c6 1 7.5 4 7.5 10v18c0 6 4 9.5 11 9.5" stroke="#2c7370" stroke-width="3" fill="none"/></svg>
<div class="a" style="left:664px;top:427.7px;width:17.5px;height:3.5px;background:#a8d0dc;border-top:1px solid #6a9aa8;border-bottom:1px solid #6a9aa8"></div>
<!--/DLG-->

<!-- ============ RIGHT PANEL ============ -->
<div class="a" style="left:817px;top:57px;width:201px;height:673px;background:#f0f0f0"></div>
<!--PAL-->
<div class="a" style="left:817px;top:57px;width:201px;height:21px;background:#f9efe6"></div>
<div class="a" style="left:822px;top:61px;width:85px;height:16px;background:#fff;border:1px solid #cfcac5"></div>
<div class="t" style="left:824.5px;top:64.5px;font-size:9.2px;color:#111">text val</div>
<svg style="left:911px;top:62px" width="12" height="13" viewBox="0 0 12 13"><path d="M4 10l-3 2.5" stroke="#3a70c0" stroke-width="1.5"/><path d="M1.5 1.5l9 9.5M10.5 1.5l-9 9.5" stroke="#d02a2a" stroke-width="2.2"/></svg>
<div class="a" style="left:926px;top:61px;width:15px;height:16px;background:#c0d6f0;border:1px solid #8eb0d8"></div>
<svg style="left:928px;top:62px" width="12" height="13" viewBox="0 0 12 13"><path d="M1 11.5c2-1 7-1 10 0l-1 1H2z" fill="#6a5ab0"/><path d="M3 11c1-3 2-6 4-9.5 1 2 0 4 1 5.5l2 4z" fill="#5a4aa8"/><circle cx="7" cy="6" r=".8" fill="#ffe070"/></svg>
<svg style="left:943px;top:67px" width="4" height="3" viewBox="0 0 5 3"><path d="M0 0h5L2.5 3z" fill="#111"/></svg>
<svg style="left:950px;top:63px" width="13" height="12" viewBox="0 0 13 12"><path d="M.5 1.5h4l1 1h3v7h-8z" fill="#f8e090" stroke="#e0b850" stroke-width=".8"/><circle cx="9.5" cy="6" r="3" fill="#fff0a0" stroke="#e0c060" stroke-width=".8"/><rect x="8.5" y="9" width="2" height="2.5" fill="#8a70c0"/></svg>
<svg style="left:966px;top:63px" width="13" height="12" viewBox="0 0 13 12"><rect x=".5" y=".5" width="5" height="4" fill="#f6d98a" stroke="#d8b050" stroke-width=".7"/><rect x="7.5" y="5.5" width="5" height="6" fill="#f6e0a0" stroke="#d8b050" stroke-width=".7"/><circle cx="6" cy="7" r="3.6" fill="#2a90d0"/><path d="M4 7h4M6 5v4" stroke="#cfefff" stroke-width="1"/></svg>
<svg style="left:983px;top:63px" width="13" height="12" viewBox="0 0 13 12"><rect x=".5" y=".5" width="5" height="4" fill="#f6d98a" stroke="#d8b050" stroke-width=".7"/><rect x="7.5" y="5.5" width="5" height="6" fill="#f6e0a0" stroke="#d8b050" stroke-width=".7"/><circle cx="6" cy="7" r="3.6" fill="#2a90d0"/><path d="M4 7h4" stroke="#cfefff" stroke-width="1"/></svg>
<svg style="left:1000px;top:63px" width="13" height="12" viewBox="0 0 13 12"><path d="M1 11.5L7 5.5" stroke="#2a60b8" stroke-width="2.4"/><path d="M1 1l10 10" stroke="#d03a3a" stroke-width="2"/><circle cx="10" cy="2.5" r="2" fill="none" stroke="#999" stroke-width="1"/></svg>
<div class="a" style="left:822px;top:81px;width:129px;height:62px;border:2px solid #3a9a3a;border-radius:5px;background:#fff;box-shadow:1px 2px 2px rgba(0,0,0,.3);overflow:hidden"><div class="a" style="left:0;top:0;width:100%;height:14px;background:linear-gradient(#b2f2ae,#80dc7c);border-bottom:1.5px solid #3a9a3a"></div></div><svg style="left:825px;top:84.5px" width="13" height="9" viewBox="0 0 13 9"><text x="0" y="8" font-family="Liberation Sans" font-weight="bold" font-size="8.5" fill="#c89030">A</text><text x="5" y="8" font-family="Liberation Sans" font-weight="bold" font-size="7" fill="#3a6080">B</text><text x="9" y="8" font-family="Liberation Sans" font-weight="bold" font-size="7" fill="#7a2020">C</text></svg><div class="t" style="left:841px;top:84.8px;font-size:9.3px;color:rgba(255,255,255,.75)">Text</div>
<div class="a" style="left:831px;top:104.5px;width:28px;height:28px;border:1.8px solid #2e2e2e;border-radius:3px;background:linear-gradient(#b4b4b4,#6c6c6c);box-shadow:1px 1px 1px rgba(0,0,0,.25);overflow:hidden"><svg style="left:-1.8px;top:-1.8px" width="28" height="28" viewBox="0 0 28 28"><path d="M9 14c0-5 4-8 10-7.5V3.5l6 5-6 5v-3c-4-.3-7 1-10 3.5z" fill="#b0ec98" opacity=".95"/><text x="1.5" y="24" font-family="Liberation Serif" font-weight="bold" font-size="14" fill="#c4642a">A</text><text x="10.5" y="23.5" font-family="Liberation Sans" font-weight="bold" font-size="9" fill="#3e7aa8">B</text><text x="16.5" y="24" font-family="Liberation Sans" font-weight="bold" font-size="12" fill="#6e1a26">C</text></svg></div>
<div class="a" style="left:864px;top:104.5px;width:28px;height:28px;border:1.8px solid #2e2e2e;border-radius:3px;background:linear-gradient(#b4b4b4,#6c6c6c);box-shadow:1px 1px 1px rgba(0,0,0,.25);overflow:hidden"><svg style="left:-1.8px;top:-1.8px" width="28" height="28" viewBox="0 0 28 28"><rect x="5" y="2.5" width="17" height="22" fill="url(#docg)" stroke="#f4e4d0" stroke-width="1"/><defs><linearGradient id="docg" x1="0" y1="0" x2="0" y2="1"><stop offset="0" stop-color="#e8b890"/><stop offset="1" stop-color="#f08a40"/></linearGradient></defs><text x="1.5" y="24" font-family="Liberation Serif" font-weight="bold" font-size="14" fill="#c4642a">A</text><text x="10.5" y="23.5" font-family="Liberation Sans" font-weight="bold" font-size="9" fill="#3e7aa8">B</text><text x="16.5" y="24" font-family="Liberation Sans" font-weight="bold" font-size="12" fill="#6e1a26">C</text></svg></div>
<div class="a" style="left:897.5px;top:104.5px;width:28px;height:28px;border:1.8px solid #2e2e2e;border-radius:3px;background:linear-gradient(#b4b4b4,#6c6c6c);box-shadow:1px 1px 1px rgba(0,0,0,.25);overflow:hidden"><svg style="left:-1.8px;top:-1.8px" width="28" height="28" viewBox="0 0 28 28"><path d="M14 3v20" stroke="#e0dcd0" stroke-width="1.4"/><path d="M5 10.5l9-3 9 5" stroke="#c8c4b8" stroke-width=".9" fill="none"/><path d="M14 4c4 0 7 3 8 7" stroke="#b88a8a" stroke-width=".8" fill="none"/><ellipse cx="8" cy="11.5" rx="4.5" ry="1.5" fill="#e8ece8"/><ellipse cx="20" cy="15.5" rx="4.5" ry="1.5" fill="#e0e8e8"/><ellipse cx="14" cy="22.5" rx="6.5" ry="2.3" fill="#e4c870" stroke="#a88a30" stroke-width=".6"/></svg></div>
<div class="a" style="left:822px;top:148px;width:63px;height:62px;border:2px solid #1c1c1c;border-radius:5px;background:#fff;box-shadow:1px 2px 2px rgba(0,0,0,.3);overflow:hidden"><div class="a" style="left:0;top:0;width:100%;height:14px;background:linear-gradient(#a4a4a4,#767676);border-bottom:1.5px solid #1c1c1c"></div></div><svg style="left:825px;top:150px" width="12" height="11" viewBox="0 0 12 11"><path d="M1 10l6-6" stroke="#aaa" stroke-width="1.5"/><circle cx="8.5" cy="3" r="2.2" fill="none" stroke="#c8c8c8" stroke-width="1"/></svg><div class="t" style="left:841px;top:151.8px;font-size:9.3px;color:#f0f0f0">Measure..</div>
<div class="a" style="left:831px;top:171px;width:28px;height:28px;border:1.8px solid #2e2e2e;border-radius:3px;background:linear-gradient(#b4b4b4,#6c6c6c);box-shadow:1px 1px 1px rgba(0,0,0,.25);overflow:hidden"><svg style="left:-1.8px;top:-1.8px" width="28" height="28" viewBox="0 0 28 28"><path d="M14 3v20" stroke="#e0dcd0" stroke-width="1.4"/><path d="M5 10.5l9-3 9 5" stroke="#c8c4b8" stroke-width=".9" fill="none"/><path d="M14 4c4 0 7 3 8 7" stroke="#b88a8a" stroke-width=".8" fill="none"/><ellipse cx="8" cy="11.5" rx="4.5" ry="1.5" fill="#e8ece8"/><ellipse cx="20" cy="15.5" rx="4.5" ry="1.5" fill="#e0e8e8"/><ellipse cx="14" cy="22.5" rx="6.5" ry="2.3" fill="#e4c870" stroke="#a88a30" stroke-width=".6"/></svg></div>
<div class="a" style="left:889px;top:148px;width:96px;height:95px;border:2px solid #1c1c1c;border-radius:5px;background:#fff;box-shadow:1px 2px 2px rgba(0,0,0,.3);overflow:hidden"><div class="a" style="left:0;top:0;width:100%;height:14px;background:linear-gradient(#a4a4a4,#767676);border-bottom:1.5px solid #1c1c1c"></div></div><svg style="left:893px;top:152px" width="12" height="8" viewBox="0 0 12 8"><rect x="0" y="1" width="9" height="6" fill="#e85a30"/><rect x="3" y="0" width="9" height="6" fill="#f0a040" opacity=".8"/></svg><div class="t" style="left:908px;top:151.8px;font-size:9.3px;color:#f0f0f0">Data Sources</div>
<div class="a" style="left:897px;top:171px;width:62px;height:62px;border:2px solid #1c1c1c;border-radius:5px;background:#fff;box-shadow:1px 2px 2px rgba(0,0,0,.3);overflow:hidden"><div class="a" style="left:0;top:0;width:100%;height:14px;background:linear-gradient(#a4a4a4,#767676);border-bottom:1.5px solid #1c1c1c"></div></div><svg style="left:900px;top:174.5px" width="13" height="9" viewBox="0 0 13 9"><text x="0" y="8" font-family="Liberation Sans" font-weight="bold" font-size="8.5" fill="#c89030">A</text><text x="5" y="8" font-family="Liberation Sans" font-weight="bold" font-size="7" fill="#3a6080">B</text><text x="9" y="8" font-family="Liberation Sans" font-weight="bold" font-size="7" fill="#7a2020">C</text></svg><div class="t" style="left:916px;top:174.8px;font-size:9.3px;color:#f0f0f0">Text</div>
<div class="a" style="left:905.5px;top:195px;width:28px;height:28px;border:1.8px solid #2e2e2e;border-radius:3px;background:linear-gradient(#b4b4b4,#6c6c6c);box-shadow:1px 1px 1px rgba(0,0,0,.25);overflow:hidden"><svg style="left:-1.8px;top:-1.8px" width="28" height="28" viewBox="0 0 28 28"><path d="M9 14c0-5 4-8 10-7.5V3.5l6 5-6 5v-3c-4-.3-7 1-10 3.5z" fill="#b0ec98" opacity=".95"/><text x="1.5" y="24" font-family="Liberation Serif" font-weight="bold" font-size="14" fill="#c4642a">A</text><text x="10.5" y="23.5" font-family="Liberation Sans" font-weight="bold" font-size="9" fill="#3e7aa8">B</text><text x="16.5" y="24" font-family="Liberation Sans" font-weight="bold" font-size="12" fill="#6e1a26">C</text></svg></div>
<!--/PAL-->

<!-- ============ SERIAL ============ -->
<!--SER-->
<div class="a" style="left:210px;top:57px;width:3px;height:673px;background:linear-gradient(90deg,#e2e2e2,#f4f4f4)"></div>
<div class="a" style="left:213px;top:554.5px;width:604px;height:176px;background:#f9efe6"></div>
<div class="t" style="left:221.5px;top:563px;font-size:8.5px;color:#111;letter-spacing:-.12px">Port:</div>
<div class="a" style="left:245px;top:559px;width:66.5px;height:16px;background:linear-gradient(#f4f4f4,#e2e2e2);border:1px solid #c8c4c0"></div><div class="t" style="left:248px;top:563.5px;font-size:8.5px;color:#111;letter-spacing:-.12px">COM6</div><svg style="left:300.5px;top:565px" width="7" height="5" viewBox="0 0 7 5"><path d="M.8 .8L3.5 3.6 6.2.8" stroke="#444" stroke-width="1.2" fill="none"/></svg>
<div class="t" style="left:315px;top:563px;font-size:8.5px;color:#111;letter-spacing:-.12px">Speed:</div>
<div class="a" style="left:346px;top:559px;width:55.5px;height:16px;background:#fff;border:1px solid #c8c4c0"></div><div class="t" style="left:349px;top:563.5px;font-size:8.5px;color:#111;letter-spacing:-.12px">9600</div><svg style="left:390.5px;top:565px" width="7" height="5" viewBox="0 0 7 5"><path d="M.8 .8L3.5 3.6 6.2.8" stroke="#444" stroke-width="1.2" fill="none"/></svg>
<div class="t" style="left:406px;top:563px;font-size:8.5px;color:#111;letter-spacing:-.12px"><span class="u">F</span>ormat:</div>
<div class="a" style="left:440.5px;top:559px;width:133px;height:16px;background:linear-gradient(#f4f4f4,#e2e2e2);border:1px solid #c8c4c0"></div><div class="t" style="left:443.5px;top:563.5px;font-size:8.5px;color:#111;letter-spacing:-.12px">Unformatted Text</div><svg style="left:562.5px;top:565px" width="7" height="5" viewBox="0 0 7 5"><path d="M.8 .8L3.5 3.6 6.2.8" stroke="#444" stroke-width="1.2" fill="none"/></svg>
<div class="a" style="left:578px;top:561.5px;width:10.5px;height:10.5px;background:#fff;border:1px solid #4a4a4a"></div><svg style="left:579.5px;top:562.5px" width="8" height="8" viewBox="0 0 8 8"><path d="M1 4l2 2.5L7 1" stroke="#111" stroke-width="1.5" fill="none"/></svg>
<div class="t" style="left:590px;top:563px;font-size:8.5px;color:#111;letter-spacing:-.12px">Reset</div>
<div class="a" style="left:620px;top:558.5px;width:67px;height:17.5px;background:linear-gradient(#f2f2f2,#e4e4e4);border:1px solid #c2c2c2"></div>
<svg style="left:631px;top:561px" width="13" height="12" viewBox="0 0 13 12"><path d="M1 3l8-2.5v9L1 12z" fill="#e8b020" stroke="#4a3a10" stroke-width=".8"/><path d="M3 9l3-4 1 2 3-4" stroke="#fff6a0" stroke-width="1" fill="none"/></svg>
<div class="t" style="left:645.5px;top:563px;font-size:8.5px;color:#111;letter-spacing:-.12px">Connect</div>
<svg style="left:800px;top:559px" width="12" height="12" viewBox="0 0 12 12"><path d="M1 11.5L6.5 6" stroke="#2a60b8" stroke-width="2.2"/><path d="M1 1l10 10" stroke="#d03a3a" stroke-width="1.8"/><circle cx="9.5" cy="2.5" r="2" fill="none" stroke="#999" stroke-width="1"/></svg>
<div class="a" style="left:213.5px;top:593.5px;width:602.5px;height:135px;background:#fff;border:1px solid #d2d2d2"></div>
<div class="a" style="left:272px;top:579px;width:45.5px;height:15px;background:#ececec;border:1px solid #d2d2d2;border-bottom:none"></div>
<div class="a" style="left:213.5px;top:577.5px;width:59px;height:17.5px;background:#fff;border:1px solid #d2d2d2;border-bottom:none"></div>
<svg style="left:220px;top:580px" width="11" height="9" viewBox="0 0 11 9"><rect x="0" y="0" width="11" height="9" fill="#2a4a2a"/><rect x="1" y="1" width="9" height="7" fill="#3a6a3a"/><path d="M2.5 2.5l2 2-2 2" stroke="#cfe" stroke-width=".9" fill="none"/></svg>
<div class="t" style="left:236.5px;top:582px;font-size:8.5px;color:#111;letter-spacing:-.12px">Terminal</div>
<svg style="left:277.5px;top:582px" width="11" height="9" viewBox="0 0 11 9"><rect x="0" y="0" width="11" height="9" fill="#2a6ab0"/><rect x="1" y="1" width="9" height="7" fill="#5a9ae0"/><path d="M1 5h3l1-2 1 3 1-1h3" stroke="#e8f4ff" stroke-width=".8" fill="none"/></svg>
<div class="t" style="left:292px;top:583.5px;font-size:8.5px;color:#111;letter-spacing:-.12px">Scope</div>
<div class="a" style="left:222px;top:605px;width:10.5px;height:10.5px;background:#fff;border:1px solid #4a4a4a"></div><svg style="left:223.5px;top:606px" width="8" height="8" viewBox="0 0 8 8"><path d="M1 4l2 2.5L7 1" stroke="#111" stroke-width="1.5" fill="none"/></svg>
<div class="t" style="left:234px;top:606px;font-size:8.5px;color:#111;letter-spacing:-.12px">Auto Scroll</div>
<div class="a" style="left:283px;top:605px;width:10.5px;height:10.5px;background:#fff;border:1px solid #4a4a4a"></div>
<div class="t" style="left:295px;top:606px;font-size:8.5px;color:#111;letter-spacing:-.12px">Hold</div>
<div class="a" style="left:742px;top:598.5px;width:67px;height:17.5px;background:linear-gradient(#f2f2f2,#e4e4e4);border:1px solid #c2c2c2"></div>
<svg style="left:758px;top:599px" width="12" height="14" viewBox="0 0 12 14"><path d="M3 1l3.5 6" stroke="#a86a20" stroke-width="1.5"/><path d="M4 7c2-1.5 4-1.5 6 0l1 5H2z" fill="#f0d050" stroke="#c8a030" stroke-width=".6"/></svg>
<div class="t" style="left:772.5px;top:603px;font-size:8.5px;color:#111;letter-spacing:-.12px">Clear</div>
<div class="a" style="left:217px;top:621px;width:597px;height:80px;background:#fff;border:1px solid #c4c4c4"></div>
<div class="a" style="left:800px;top:622px;width:13px;height:78px;background:#f4f4f4"></div>
<svg style="left:803px;top:626px" width="7" height="5" viewBox="0 0 7 5"><path d="M.8 4.2L3.5 1.4 6.2 4.2" stroke="#b8b8b8" stroke-width="1.1" fill="none"/></svg>
<svg style="left:803px;top:690px" width="7" height="5" viewBox="0 0 7 5"><path d="M.8 .8L3.5 3.6 6.2.8" stroke="#b8b8b8" stroke-width="1.1" fill="none"/></svg>
<div class="a" style="left:222px;top:706.5px;width:466px;height:16px;background:#fff;border:1px solid #dadada"></div>
<div class="a" style="left:692px;top:709.5px;width:10.5px;height:10.5px;background:#fff;border:1px solid #4a4a4a"></div><svg style="left:693.5px;top:710.5px" width="8" height="8" viewBox="0 0 8 8"><path d="M1 4l2 2.5L7 1" stroke="#111" stroke-width="1.5" fill="none"/></svg>
<div class="t" style="left:704px;top:711px;font-size:8.5px;color:#111;letter-spacing:-.12px">Auto Clear</div>
<div class="a" style="left:752.5px;top:706px;width:56.5px;height:17.5px;background:linear-gradient(#f0f0f0,#e8e8e8);border:1px solid #dadada"></div>
<svg style="left:764px;top:709px" width="12" height="11" viewBox="0 0 12 11"><rect x="0" y="1" width="10" height="8" fill="#9a9a9a"/><rect x="1" y="2" width="8" height="5" fill="#d8d8d8"/><circle cx="9" cy="8" r="2.5" fill="#7a7a7a"/></svg>
<div class="t" style="left:778.5px;top:711px;font-size:8.5px;color:#111;letter-spacing:-.12px">Send</div>
<div class="a" style="left:817px;top:711px;width:201px;height:19px;background:#f9efe6"></div>
<div class="t" style="left:887.5px;top:716.5px;font-size:8.8px;font-weight:bold;color:#222;letter-spacing:-.1px">Arduino eBay Ads:</div>
<svg style="left:986px;top:713px" width="12" height="12" viewBox="0 0 12 12"><path d="M1 11.5L6.5 6" stroke="#2a60b8" stroke-width="2.2"/><path d="M1 1l10 10" stroke="#d03a3a" stroke-width="1.8"/><circle cx="9.5" cy="2.5" r="2" fill="none" stroke="#999" stroke-width="1"/></svg>
<div class="a" style="left:1003px;top:715.5px;width:11.5px;height:11px;background:#d83838;border-radius:1px"></div>
<svg style="left:1004.2px;top:716px" width="9" height="10" viewBox="0 0 9 10"><path d="M2.5 3.5a3 3 0 1 0 4 0M4.5 1.5v4" stroke="#fff" stroke-width="1.2" fill="none"/></svg>
<div class="t" style="left:893.5px;top:720px;font-family:'Liberation Serif',serif;font-size:13.5px;color:#000;letter-spacing:.4px">www.mfgrobots.com</div>
<!--/SER-->

</body></html>
